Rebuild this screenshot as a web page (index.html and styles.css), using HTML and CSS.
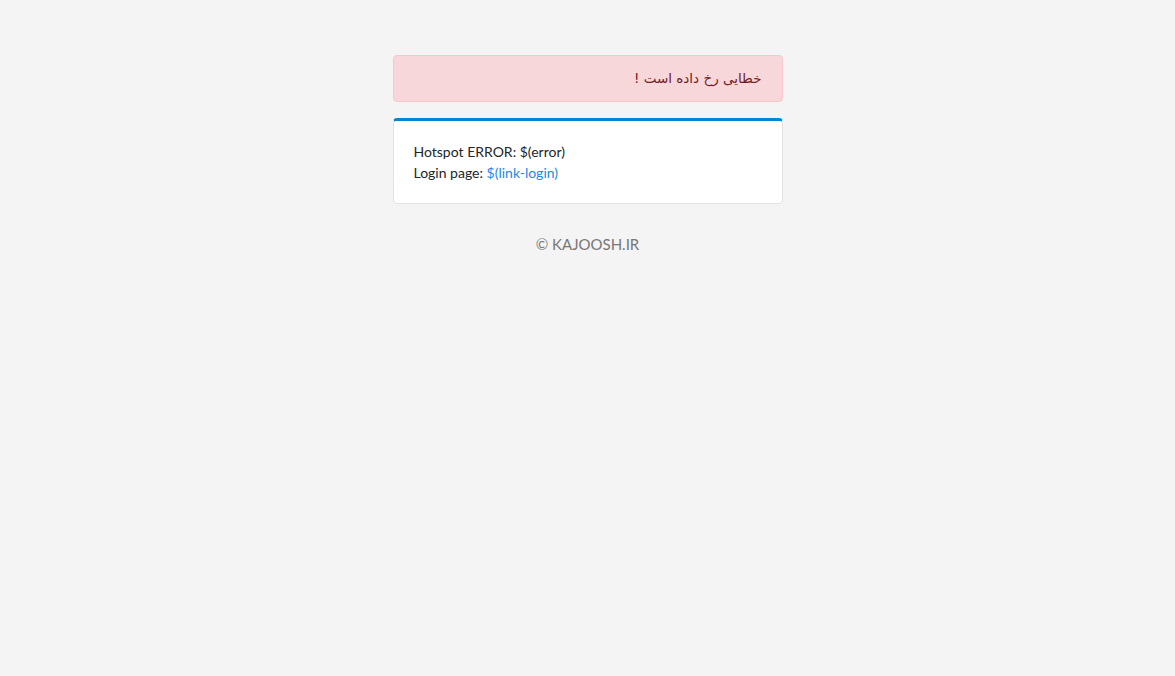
FILE: index.html
```html
<!DOCTYPE html>
<html lang="fa">
<head>
<meta charset="utf-8">
<title>Hotspot Error</title>
<link rel="stylesheet" href="styles.css">
</head>
<body>
<main class="wrap">
  <div class="alert" dir="rtl">خطایی رخ داده است !</div>
  <div class="card" dir="ltr">
    <div>Hotspot ERROR: $(error)</div>
    <div>Login page: <a class="link" href="#">$(link-login)</a></div>
  </div>
  <footer class="footer">© KAJOOSH.IR</footer>
</main>
</body>
</html>
```
FILE: styles.css
```css
html, body {
  margin: 0;
  padding: 0;
}
body {
  background: #f4f4f4;
  font-family: "Lato", "DejaVu Sans", sans-serif;
  font-size: 14px;
  line-height: 21px;
  color: #212529;
}
.wrap {
  width: 390px;
  margin: 55px auto 0;
  display: flex;
  flex-direction: column;
}
.alert {
  background: #f8d7da;
  border: 1px solid #f5c6cb;
  color: #721c24;
  border-radius: 4px;
  padding: 12px 20px;
  text-align: right;
  font-family: "DejaVu Sans", sans-serif;
  font-size: 13.5px;
}
.card {
  margin-top: 16px;
  background: #fff;
  border: 1px solid #e3e3e3;
  border-top: 3px solid #0288d1;
  border-radius: 4px;
  padding: 20px 20px 20px;
}
.link {
  color: #1e88e5;
  text-decoration: none;
}
.footer {
  margin-top: 30px;
  text-align: center;
  color: #777;
  font-size: 15px;
}
```
